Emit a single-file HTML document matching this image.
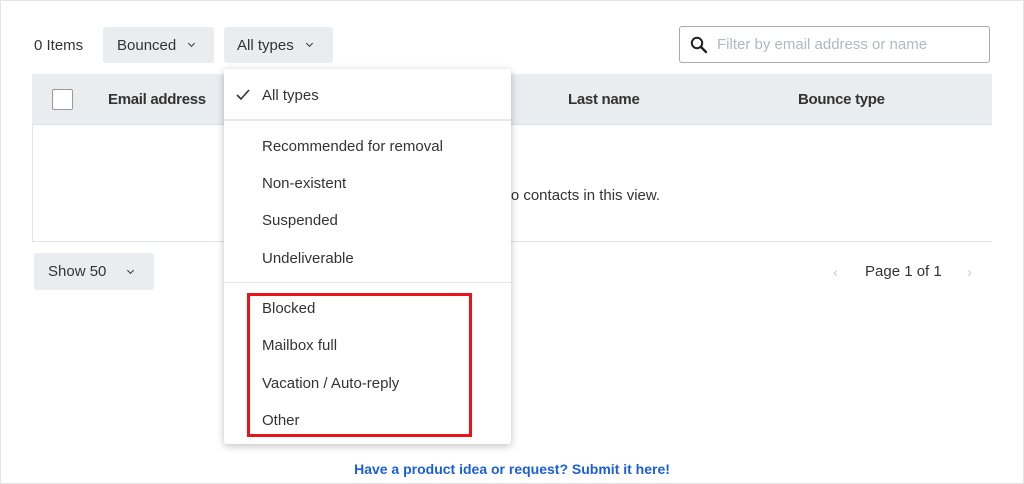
<!DOCTYPE html>
<html><head><style>
*{box-sizing:border-box;margin:0;padding:0}
body{width:1024px;height:484px;background:#fff;font-family:"Liberation Sans",Arial,sans-serif;color:#333;position:relative;overflow:hidden}
.frame{position:absolute;left:0;top:0;width:1024px;height:484px;border:1px solid #e4e4e4}
.abs{position:absolute}
.btn{position:absolute;background:#e9edf0;border-radius:3px;font-size:15px;color:#333;display:flex;align-items:center}
.chev{display:inline-block;width:5px;height:5px;border-right:1.5px solid #333;border-bottom:1.5px solid #333;transform:rotate(45deg);margin-left:13px;margin-top:-3px}
.menu{position:absolute;z-index:5;left:224px;top:69px;width:287px;height:375px;background:#fff;border-radius:3px;box-shadow:0 2px 8px rgba(0,0,0,.25)}
.item{position:absolute;left:38px;font-size:15px;color:#333}
.th{position:absolute;top:91px;font-size:15px;font-weight:bold;color:#333;letter-spacing:-0.3px}
</style></head><body>
<div class="frame"></div>
<div class="abs" style="left:34px;top:37px;font-size:15px">0 Items</div>
<div class="btn" style="left:103px;top:27px;width:111px;height:36px;padding-left:14px">Bounced<span class="chev"></span></div>
<div class="btn" style="left:224px;top:27px;width:109px;height:36px;padding-left:13px">All types<span class="chev"></span></div>
<div class="abs" style="left:679px;top:26px;width:311px;height:37px;border:1px solid #aaa;border-radius:3px">
<svg class="abs" style="left:10px;top:9px" width="18" height="18" viewBox="0 0 18 18"><circle cx="7" cy="7" r="5.2" fill="none" stroke="#222" stroke-width="2"/><path d="M11 11l5 5" stroke="#222" stroke-width="2.4" stroke-linecap="round"/></svg>
<div class="abs" style="left:37px;top:9px;font-size:15px;color:#b3b8bd">Filter by email address or name</div></div>
<div class="abs" style="left:32px;top:74px;width:960px;height:168px;border:1px solid #e2e5e8;border-top:none;border-right:none"></div>
<div class="abs" style="left:32px;top:74px;width:960px;height:51px;background:#e9edf0;border-bottom:1px solid #dde1e4"></div>
<div class="abs" style="left:52px;top:89px;width:21px;height:21px;background:#fff;border:1px solid #999;border-radius:2px"></div>
<div class="th" style="left:108px">Email address</div>
<div class="th" style="left:568px">Last name</div>
<div class="th" style="left:798px">Bounce type</div>
<div class="abs" style="left:500px;top:187px;font-size:15px;color:#333">No contacts in this view.</div>
<div class="btn" style="left:34px;top:253px;width:120px;height:37px;padding-left:14px">Show 50<span class="chev" style="margin-left:22px"></span></div>
<div class="abs" style="left:833px;top:264px;font-size:15px;color:#ccc">‹</div>
<div class="abs" style="left:865px;top:263px;font-size:15px;color:#333">Page 1 of 1</div>
<div class="abs" style="left:967px;top:264px;font-size:15px;color:#ccc">›</div>
<div class="menu">
<svg class="abs" style="left:12px;top:20px" width="14" height="12" viewBox="0 0 14 12"><path d="M1 6l4 4 8-9" fill="none" stroke="#333" stroke-width="1.6"/></svg>
<div class="item" style="top:18px">All types</div>
<div class="abs" style="left:0;top:50px;width:287px;height:2px;background:#e6e8ea"></div>
<div class="item" style="top:69px">Recommended for removal</div>
<div class="item" style="top:106px">Non-existent</div>
<div class="item" style="top:143px">Suspended</div>
<div class="item" style="top:181px">Undeliverable</div>
<div class="abs" style="left:0;top:213px;width:287px;height:1px;background:#e2e4e6"></div>
<div class="item" style="top:231px">Blocked</div>
<div class="item" style="top:268px">Mailbox full</div>
<div class="item" style="top:306px">Vacation / Auto-reply</div>
<div class="item" style="top:343px">Other</div>
<div class="abs" style="left:23px;top:224px;width:225px;height:144px;border:3px solid #e8141c"></div>
</div>
<div class="abs" style="left:0;width:1024px;top:461px;text-align:center;font-size:14px;font-weight:bold;color:#1a5fd8">Have a product idea or request? Submit it here!</div>
</body></html>
